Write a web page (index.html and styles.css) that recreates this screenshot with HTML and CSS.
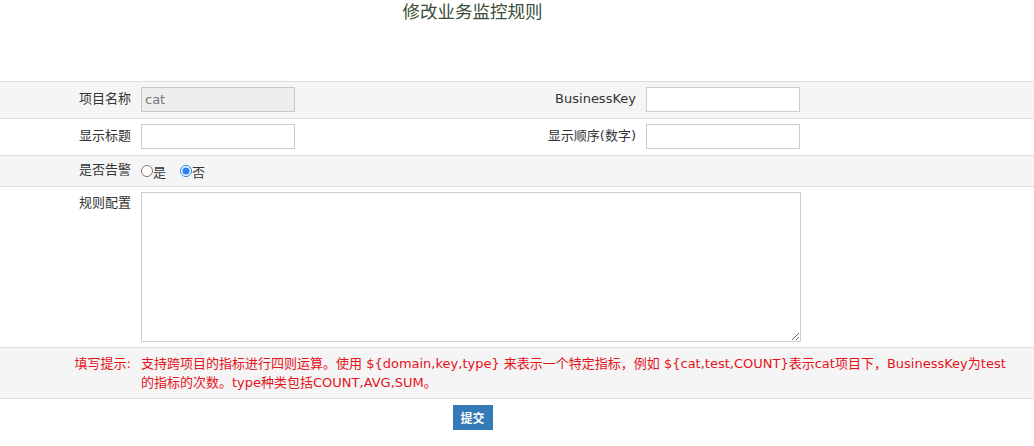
FILE: index.html
```html
<!DOCTYPE html>
<html lang="zh-CN">
<head>
<meta charset="utf-8">
<title>修改业务监控规则</title>
<link rel="stylesheet" href="styles.css">
</head>
<body>
<div class="page">
  <h3 class="title">修改业务监控规则</h3>
  <form class="form">
    <div class="row alt">
      <label class="lbl">项目名称</label>
      <div class="cell"><input class="inp" type="text" value="cat" disabled></div>
      <label class="lbl">BusinessKey</label>
      <div class="cell"><input class="inp" type="text"></div>
    </div>
    <div class="row">
      <label class="lbl">显示标题</label>
      <div class="cell"><input class="inp" type="text"></div>
      <label class="lbl">显示顺序(数字)</label>
      <div class="cell"><input class="inp" type="text"></div>
    </div>
    <div class="row alt short">
      <label class="lbl">是否告警</label>
      <div class="cell wide radios">
        <label class="opt"><input type="radio" name="alarm">是</label>
        <label class="opt"><input type="radio" name="alarm" checked>否</label>
      </div>
    </div>
    <div class="row top">
      <label class="lbl">规则配置</label>
      <div class="cell wide"><textarea class="area"></textarea></div>
    </div>
    <div class="row alt hint">
      <span class="lbl red">填写提示:</span>
      <div class="cell wide red">支持跨项目的指标进行四则运算。使用 ${domain,key,type} 来表示一个特定指标，例如 ${cat,test,COUNT}表示cat项目下，BusinessKey为test的指标的次数。type种类包括COUNT,AVG,SUM。</div>
    </div>
    <div class="last"></div>
    <div class="actions"><button type="button" class="btn">提交</button></div>
  </form>
</div>
</body>
</html>
```

FILE: styles.css
```css
html, body {
  margin: 0;
  padding: 0;
  background: #fff;
}
body {
  font-family: "DejaVu Sans", "Noto Sans CJK SC", sans-serif;
  font-size: 13px;
  color: #333;
}
.title {
  width: 945px;
  margin: 0 0 59px;
  text-align: center;
  font-family: "Noto Sans CJK SC", sans-serif;
  font-size: 17.5px;
  font-weight: normal;
  line-height: 22px;
  color: #3a4d38;
}
.row {
  display: grid;
  grid-template-columns: 131px 300px 185px 1fr;
  column-gap: 10px;
  align-items: center;
  border-top: 1px solid #ddd;
  padding: 5px 0 6px;
}
.row.alt {
  background: #f5f5f5;
}
.row.short {
  height: 30px;
  padding: 0;
  box-sizing: content-box;
}
.row.top {
  align-items: start;
  padding: 5px 0 5px;
}
.row.hint {
  align-items: start;
  padding: 6px 0 6px;
  line-height: 19px;
}
.lbl {
  text-align: right;
  white-space: nowrap;
  line-height: 18px;
  padding-bottom: 2px;
}
.row.top .lbl {
  padding-top: 2px;
}
.row.hint .lbl {
  line-height: 19px;
  padding: 0;
}
.cell.wide {
  grid-column: 2 / 5;
}
.inp {
  box-sizing: border-box;
  width: 154px;
  height: 25px;
  margin: 0;
  padding: 0 3px;
  border: 1px solid #ccc;
  font: inherit;
  color: #333;
  background: #fff;
  display: block;
}
.inp:disabled {
  background: #eee;
  color: #777;
  border-color: #c8c8c8;
}
.radios {
  display: flex;
  align-items: center;
  gap: 14px;
}
.opt {
  display: flex;
  align-items: center;
}
.opt input {
  margin: 0;
  width: 12px;
  height: 12px;
  accent-color: #2f80ed;
}
.area {
  box-sizing: border-box;
  display: block;
  width: 660px;
  height: 150px;
  margin: 0;
  border: 1px solid #ccc;
  font: inherit;
}
.red {
  color: #e4131b;
}
.hint .cell {
  padding-right: 24px;
}
.last {
  border-top: 1px solid #ddd;
}
.actions {
  width: 945px;
  text-align: center;
  padding-top: 6px;
}
.btn {
  width: 40px;
  height: 25px;
  padding: 0;
  border: none;
  border-radius: 0;
  background: #337ab7;
  color: #fff;
  font: bold 12px "Noto Sans CJK SC", sans-serif;
}
```
